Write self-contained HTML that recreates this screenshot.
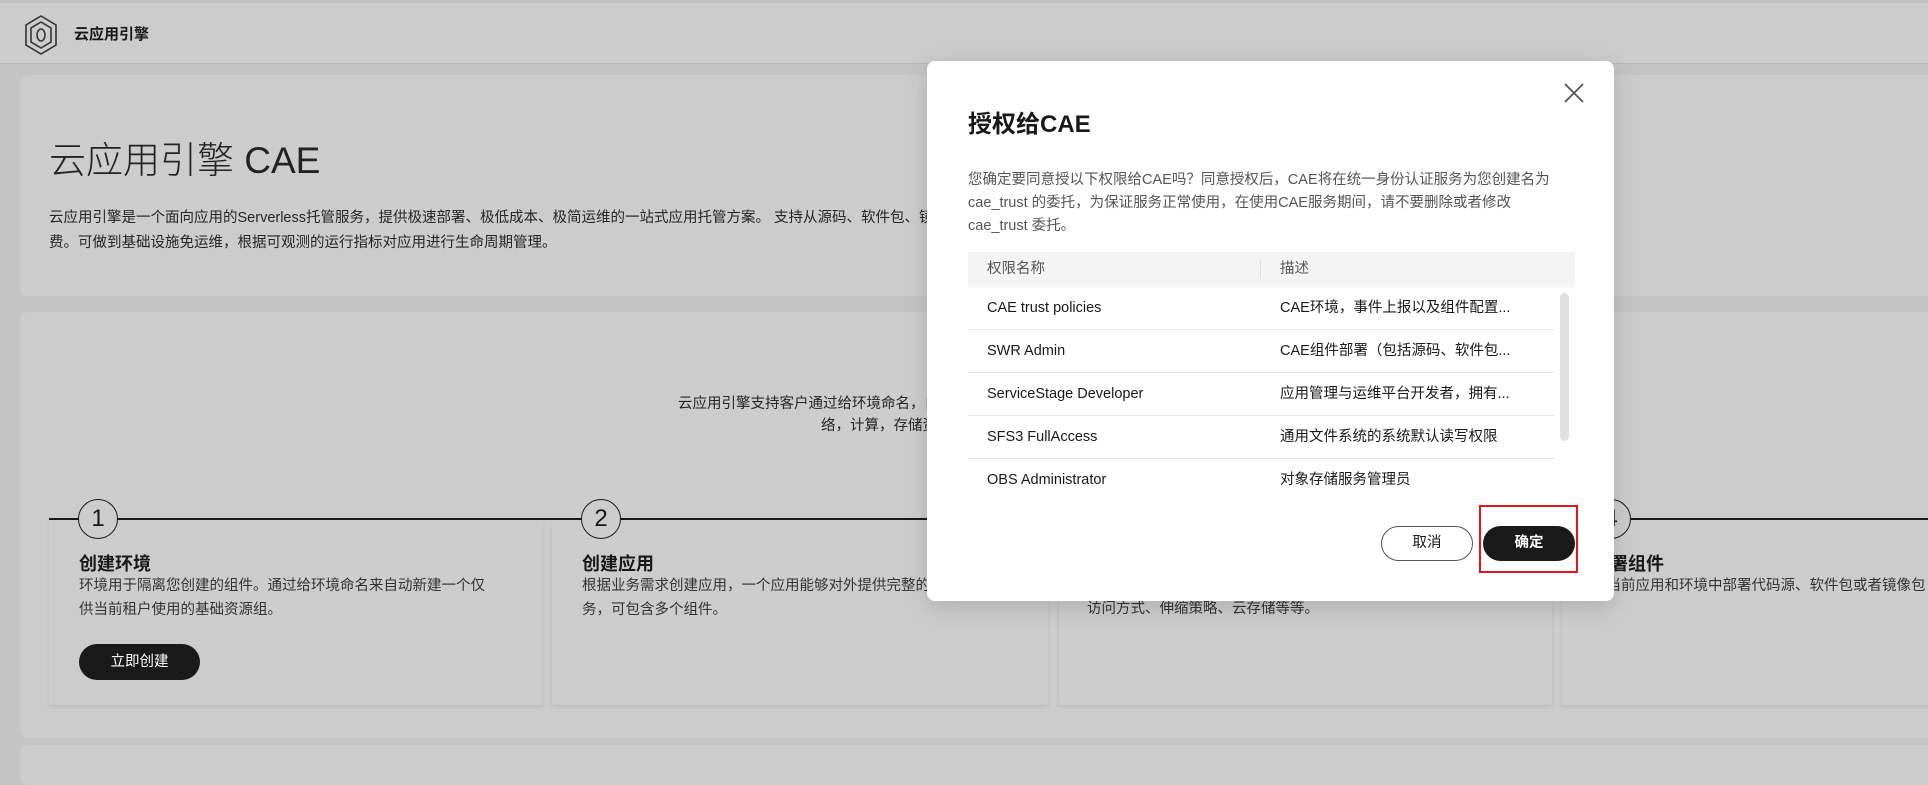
<!DOCTYPE html>
<html><head><meta charset="utf-8"><style>
*{margin:0;padding:0;box-sizing:border-box}
body{width:1928px;height:765px;overflow:hidden;background:#c4c4c4;font-family:"Liberation Sans","Noto Sans CJK SC",sans-serif;color:#191919;position:relative}
.abs{position:absolute}
.hdr{left:0;top:0;width:1928px;height:64px;background:#cccccc;border-top:3px solid #c0c0c0;border-bottom:1px solid #b8b8b8}
.card{background:#cccccc;border-radius:8px}
.step{background:#cccccc;box-shadow:0 2px 4px rgba(0,0,0,0.08)}
.circ{width:40px;height:40px;border:1.5px solid #191919;border-radius:50%;background:#cccccc;font-size:24px;text-align:center;line-height:37px}
.st{font-size:18px;font-weight:bold}
.sd{font-size:14.5px;line-height:24px;color:#333}
.modal{left:927px;top:61px;width:687px;height:540px;background:#fff;border-radius:8px;box-shadow:0 6px 24px rgba(0,0,0,0.15)}
.row{position:absolute;left:41px;width:586px;height:43px;border-bottom:1px solid #e6e6e6;font-size:14.5px;line-height:43px}
.row span{position:absolute}
</style></head><body>
<div class="abs hdr"></div>
<svg class="abs" style="left:24px;top:15px" width="34" height="40" viewBox="0 0 34 40" fill="none" stroke="#333" stroke-width="1.6">
<path d="M17 1 L32 10 L32 30 L17 39 L2 30 L2 10 Z"/><path d="M17 7 L27 13 L27 27 L17 33 L7 27 L7 13 Z"/><ellipse cx="17" cy="20" rx="4" ry="6"/></svg>
<div class="abs" style="left:74px;top:23px;font-size:15px;font-weight:bold">云应用引擎</div>

<div class="abs card" style="left:20px;top:75px;width:1920px;height:221px"></div>
<div class="abs" style="left:49px;top:130px;font-size:37px;font-weight:300;color:#222">云应用引擎 CAE</div>
<div class="abs" style="left:49px;top:206px;font-size:14.5px;line-height:25px;color:#252525">云应用引擎是一个面向应用的Serverless托管服务，提供极速部署、极低成本、极简运维的一站式应用托管方案。 支持从源码、软件包、镜像包快速部署应用，按需使用，按量付<br>费。可做到基础设施免运维，根据可观测的运行指标对应用进行生命周期管理。</div>

<div class="abs card" style="left:20px;top:312px;width:1920px;height:426px"></div>
<div class="abs card" style="left:20px;top:745px;width:1920px;height:40px"></div>
<div class="abs" style="left:678px;top:392px;font-size:14.5px;color:#252525">云应用引擎支持客户通过给环境命名，自动新建一个仅供当前租户使用的基础资源组</div>
<div class="abs" style="left:821px;top:414px;font-size:14.5px;color:#252525">络，计算，存储资源</div>

<div class="abs step" style="left:49px;top:519px;width:493px;height:186px"></div>
<div class="abs step" style="left:552px;top:519px;width:496px;height:186px"></div>
<div class="abs step" style="left:1059px;top:519px;width:493px;height:186px"></div>
<div class="abs step" style="left:1562px;top:519px;width:400px;height:186px"></div>
<div class="abs" style="left:49px;top:518px;width:1880px;height:1.5px;background:#191919"></div>
<div class="abs circ" style="left:78px;top:499px">1</div>
<div class="abs circ" style="left:581px;top:499px">2</div>
<div class="abs circ" style="left:1591px;top:499px">4</div>
<div class="abs st" style="left:79px;top:550px">创建环境</div>
<div class="abs sd" style="left:79px;top:574px">环境用于隔离您创建的组件。通过给环境命名来自动新建一个仅<br>供当前租户使用的基础资源组。</div>
<div class="abs" style="left:79px;top:644px;width:121px;height:36px;background:#1a1a1a;color:#fff;border-radius:18px;text-align:center;line-height:36px;font-size:14.5px">立即创建</div>
<div class="abs st" style="left:582px;top:550px">创建应用</div>
<div class="abs sd" style="left:582px;top:574px">根据业务需求创建应用，一个应用能够对外提供完整的业务服<br>务，可包含多个组件。</div>
<div class="abs sd" style="left:1087px;top:597px">访问方式、伸缩策略、云存储等等。</div>
<div class="abs st" style="left:1592px;top:550px">部署组件</div>
<div class="abs sd" style="left:1592px;top:574px">在当前应用和环境中部署代码源、软件包或者镜像包</div>

<div class="abs modal">
<svg class="abs" style="left:637px;top:22px" width="20" height="20" viewBox="0 0 20 20" stroke="#555" stroke-width="1.8"><path d="M1 1L19 19M19 1L1 19"/></svg>
<div class="abs" style="left:41px;top:43px;font-size:24px;font-weight:bold">授权给CAE</div>
<div class="abs" style="left:41px;top:108px;width:620px;font-size:14.5px;line-height:23px;color:#555">您确定要同意授以下权限给CAE吗？同意授权后，CAE将在统一身份认证服务为您创建名为<br>cae_trust 的委托，为保证服务正常使用，在使用CAE服务期间，请不要删除或者修改<br>cae_trust 委托。</div>
<div class="abs" style="left:41px;top:191px;width:607px;height:35px;background:#f4f4f4;font-size:14.5px;line-height:35px;color:#555">
<span class="abs" style="left:19px">权限名称</span><span class="abs" style="left:292px;top:8px;width:1px;height:19px;background:#ddd"></span><span class="abs" style="left:312px">描述</span></div>
<div class="row" style="top:226px"><span style="left:19px">CAE trust policies</span><span style="left:312px">CAE环境，事件上报以及组件配置...</span></div>
<div class="row" style="top:269px"><span style="left:19px">SWR Admin</span><span style="left:312px">CAE组件部署（包括源码、软件包...</span></div>
<div class="row" style="top:312px"><span style="left:19px">ServiceStage Developer</span><span style="left:312px">应用管理与运维平台开发者，拥有...</span></div>
<div class="row" style="top:355px"><span style="left:19px">SFS3 FullAccess</span><span style="left:312px">通用文件系统的系统默认读写权限</span></div>
<div class="row" style="top:398px;border-bottom:none"><span style="left:19px">OBS Administrator</span><span style="left:312px">对象存储服务管理员</span></div>
<div class="abs" style="left:633px;top:232px;width:9px;height:148px;background:#e0e0e0;border-radius:5px"></div>
<div class="abs" style="left:454px;top:465px;width:92px;height:35px;border:1px solid #555;border-radius:18px;text-align:center;line-height:33px;font-size:14.5px">取消</div>
<div class="abs" style="left:556px;top:465px;width:92px;height:35px;background:#1a1a1a;color:#fff;border-radius:18px;text-align:center;line-height:35px;font-size:14.5px;font-weight:bold">确定</div>
<div class="abs" style="left:552px;top:444px;width:99px;height:68px;border:2px solid #e8141a"></div>
</div>
</body></html>
